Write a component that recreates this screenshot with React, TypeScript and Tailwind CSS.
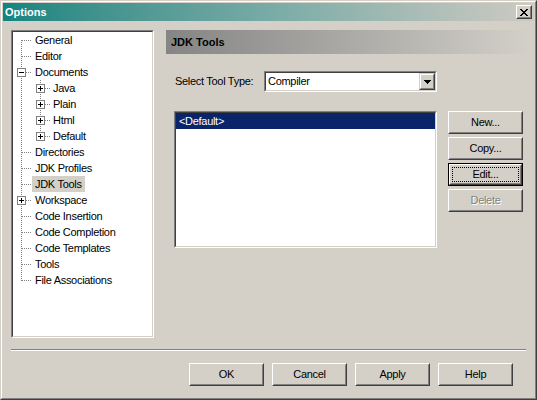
import React from "react";

type TreeItem = {
  label: string;
  level: 0 | 1;
  box?: "+" | "-";
  first?: boolean;
  last?: boolean;
  lastChild?: boolean;
  selected?: boolean;
};

const items: TreeItem[] = [
  { label: "General", level: 0, first: true },
  { label: "Editor", level: 0 },
  { label: "Documents", level: 0, box: "-" },
  { label: "Java", level: 1, box: "+" },
  { label: "Plain", level: 1, box: "+" },
  { label: "Html", level: 1, box: "+" },
  { label: "Default", level: 1, box: "+", lastChild: true },
  { label: "Directories", level: 0 },
  { label: "JDK Profiles", level: 0 },
  { label: "JDK Tools", level: 0, selected: true },
  { label: "Workspace", level: 0, box: "+" },
  { label: "Code Insertion", level: 0 },
  { label: "Code Completion", level: 0 },
  { label: "Code Templates", level: 0 },
  { label: "Tools", level: 0 },
  { label: "File Associations", level: 0, last: true },
];

const DOT = "1 1";

function ExpandBox({ cx, sign }: { cx: number; sign: "+" | "-" }) {
  return (
    <g shapeRendering="crispEdges">
      <rect x={cx - 3.5} y={4.5} width={8} height={8} fill="#fff" stroke="#808080" />
      <line x1={cx - 2} y1={8.5} x2={cx + 3} y2={8.5} stroke="#000" />
      {sign === "+" && <line x1={cx + 0.5} y1={6} x2={cx + 0.5} y2={11} stroke="#000" />}
    </g>
  );
}

function Connector({ item }: { item: TreeItem }) {
  const width = item.level === 0 ? 19 : 37;
  const rootX = 8.5;
  const childX = 27.5;
  const rootTop = item.first ? 8 : 0;
  const rootBottom = item.last ? 9 : 16;
  return (
    <svg width={width} height={16} className="shrink-0" shapeRendering="crispEdges">
      <line x1={rootX} y1={rootTop} x2={rootX} y2={rootBottom} stroke="#808080" strokeDasharray={DOT} />
      {item.level === 0 ? (
        <>
          <line x1={item.box ? 13 : 9} y1={8.5} x2={19} y2={8.5} stroke="#808080" strokeDasharray={DOT} />
          {item.box && <ExpandBox cx={8} sign={item.box} />}
        </>
      ) : (
        <>
          <line
            x1={childX}
            y1={0}
            x2={childX}
            y2={item.lastChild ? 9 : 16}
            stroke="#808080"
            strokeDasharray={DOT}
          />
          <line x1={item.box ? 32 : 28} y1={8.5} x2={37} y2={8.5} stroke="#808080" strokeDasharray={DOT} />
          {item.box && <ExpandBox cx={27} sign={item.box} />}
        </>
      )}
    </svg>
  );
}

function Sunken({ className, children }: { className?: string; children?: React.ReactNode }) {
  return (
    <div
      className={`border border-t-[#808080] border-l-[#808080] border-b-white border-r-white ${className ?? ""}`}
    >
      <div className="h-full w-full border border-t-[#404040] border-l-[#404040] border-b-[#d4d0c8] border-r-[#d4d0c8] bg-white">
        {children}
      </div>
    </div>
  );
}

function Button({
  label,
  disabled,
  isDefault,
}: {
  label: string;
  disabled?: boolean;
  isDefault?: boolean;
}) {
  const text = disabled ? (
    <span className="text-[#808080] [text-shadow:1px_1px_0_#ffffff]">{label}</span>
  ) : (
    <span>{label}</span>
  );
  if (isDefault) {
    return (
      <div className="w-[75px] h-[23px] border border-black">
        <div className="h-full w-full border border-t-white border-l-white border-b-[#404040] border-r-[#404040]">
          <div className="h-full w-full border border-t-[#d4d0c8] border-l-[#d4d0c8] border-b-[#808080] border-r-[#808080] p-px">
            <div className="h-full w-full border border-dotted border-black flex items-center justify-center">
              {text}
            </div>
          </div>
        </div>
      </div>
    );
  }
  return (
    <div className="w-[75px] h-[23px] border border-t-white border-l-white border-b-[#404040] border-r-[#404040]">
      <div className="h-full w-full border border-t-[#d4d0c8] border-l-[#d4d0c8] border-b-[#808080] border-r-[#808080] flex items-center justify-center">
        {text}
      </div>
    </div>
  );
}

export default function App() {
  return (
    <div
      className="w-[537px] h-[400px] bg-[#d4d0c8] text-black text-[11px] tracking-[-0.3px] leading-none border border-t-[#d4d0c8] border-l-[#d4d0c8] border-b-[#404040] border-r-[#404040] select-none"
      style={{ fontFamily: '"Liberation Sans", Arial, sans-serif' }}
    >
      <div className="h-full w-full border border-t-white border-l-white border-b-[#808080] border-r-[#808080] p-px flex flex-col">
        {/* Caption bar */}
        <div className="h-[18px] shrink-0 flex items-center justify-between bg-gradient-to-r from-[#0f8480] via-[#78aba6] to-[#cdcac2] pl-[2px] pr-[2px]">
          <span className="text-white font-bold tracking-normal">Options</span>
          <div className="w-[16px] h-[14px] border border-t-white border-l-white border-b-[#404040] border-r-[#404040] bg-[#d4d0c8]">
            <div className="h-full w-full border border-t-[#d4d0c8] border-l-[#d4d0c8] border-b-[#808080] border-r-[#808080] flex items-center justify-center">
              <svg width={8} height={7} shapeRendering="crispEdges">
                <path
                  d="M0 0h2v1h-2zM6 0h2v1h-2zM1 1h2v1h-2zM5 1h2v1h-2zM2 2h4v1h-4zM3 3h2v1h-2zM2 4h4v1h-4zM1 5h2v1h-2zM5 5h2v1h-2zM0 6h2v1h-2zM6 6h2v1h-2z"
                  fill="#000"
                />
              </svg>
            </div>
          </div>
        </div>

        <div className="flex-1 px-2 pt-[9px] flex flex-col">
          <div className="flex">
            {/* Category tree */}
            <Sunken className="w-[143px] h-[308px] shrink-0">
              <div className="flex flex-col">
                {items.map((item) => (
                  <div key={item.label} className="h-4 flex items-center">
                    <Connector item={item} />
                    <span
                      className={`h-4 px-[3px] flex items-center whitespace-nowrap ${
                        item.selected ? "bg-[#d4d0c8]" : ""
                      }`}
                    >
                      {item.label}
                    </span>
                  </div>
                ))}
              </div>
            </Sunken>

            {/* Page */}
            <div className="ml-[12px] flex-1 flex flex-col">
              <div className="h-[24px] flex items-center pl-[5px] bg-gradient-to-r from-[#858585] to-[#d2cfc8]">
                <span className="font-bold tracking-normal text-[#000]">JDK Tools</span>
              </div>

              <div className="mt-[17px] pl-2 flex items-center">
                <span className="w-[90px] pl-px">Select Tool Type:</span>
                <Sunken className="w-[173px] h-[21px]">
                  <div className="h-full flex items-center">
                    <span className="flex-1 pl-[2px]">Compiler</span>
                    <div className="w-[16px] h-[17px] border border-t-[#d4d0c8] border-l-[#d4d0c8] border-b-[#404040] border-r-[#404040] bg-[#d4d0c8]">
                      <div className="h-full w-full border border-t-white border-l-white border-b-[#808080] border-r-[#808080] flex items-center justify-center">
                        <svg width={7} height={4} shapeRendering="crispEdges">
                          <path d="M0 0h7v1h-7zM1 1h5v1h-5zM2 2h3v1h-3zM3 3h1v1h-1z" fill="#000" />
                        </svg>
                      </div>
                    </div>
                  </div>
                </Sunken>
              </div>

              <div className="mt-[19px] pl-2 flex">
                <Sunken className="w-[263px] h-[137px]">
                  <div className="h-4 bg-[#0a246a] text-white flex items-center pl-[3px]">
                    &lt;Default&gt;
                  </div>
                </Sunken>
                <div className="ml-[11px] flex flex-col gap-[3px]">
                  <Button label="New..." />
                  <Button label="Copy..." />
                  <Button label="Edit..." isDefault />
                  <Button label="Delete" disabled />
                </div>
              </div>
            </div>
          </div>

          {/* Etched separator */}
          <div className="mt-[11px] border-t border-t-[#808080] border-b border-b-white" />

          <div className="mt-[12px] pr-[13px] flex justify-end gap-2">
            <Button label="OK" />
            <Button label="Cancel" />
            <Button label="Apply" />
            <Button label="Help" />
          </div>
        </div>
      </div>
    </div>
  );
}
